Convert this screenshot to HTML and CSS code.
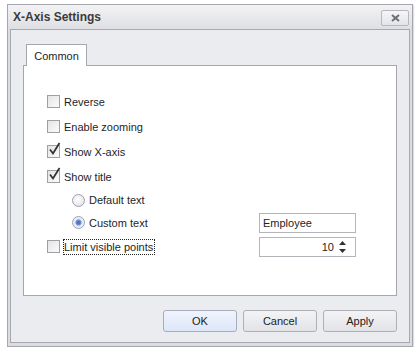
FILE: index.html
```html
<!DOCTYPE html>
<html>
<head>
<meta charset="utf-8">
<link rel="stylesheet" href="styles.css">
</head>
<body>
<div class="window">
  <div class="titlebar">
    <span class="title">X-Axis Settings</span>
    <button class="close" aria-label="Close">
      <svg width="9" height="8" viewBox="0 0 9 8"><path d="M1 1 L8 7 M8 1 L1 7" stroke="#6b6e76" stroke-width="2" fill="none"/></svg>
    </button>
  </div>
  <div class="client">
    <div class="tabs">
      <div class="tab">Common</div>
    </div>
    <div class="panel">
      <div class="row"><span class="cb"></span><span>Reverse</span></div>
      <div class="row"><span class="cb"></span><span>Enable zooming</span></div>
      <div class="row"><span class="cb checked"><svg width="13" height="14" viewBox="0 0 13 14"><path d="M2 7.5 L5 11.5 L11.5 1" stroke="#333" stroke-width="1.8" fill="none"/></svg></span><span>Show X-axis</span></div>
      <div class="row"><span class="cb checked"><svg width="13" height="14" viewBox="0 0 13 14"><path d="M2 7.5 L5 11.5 L11.5 1" stroke="#333" stroke-width="1.8" fill="none"/></svg></span><span>Show title</span></div>
      <div class="row sub"><span class="rb"></span><span>Default text</span></div>
      <div class="row sub split mid"><span class="rb on"></span><span>Custom text</span><span class="field text">Employee</span></div>
      <div class="row split"><span class="cb"></span><span class="focus">Limit visible points</span>
        <span class="field spin"><span class="val">10</span><span class="arrows"><svg width="7" height="14" viewBox="0 0 7 14"><path d="M3.5 1 L7 5 L0 5 Z M0 9 L7 9 L3.5 13 Z" fill="#333"/></svg></span></span>
      </div>
    </div>
    <div class="buttons">
      <button class="btn default">OK</button>
      <button class="btn">Cancel</button>
      <button class="btn">Apply</button>
    </div>
  </div>
</div>
</body>
</html>
```

FILE: styles.css
```css
html, body { margin: 0; padding: 0; background: #ffffff; }
body { font-family: "Liberation Sans", Arial, sans-serif; font-size: 11px; color: #1e1e1e; }
* { box-sizing: border-box; }

.window {
  margin: 4px 0 0 7px;
  width: 406px;
  border: 1px solid #a6a7ae;
  background: linear-gradient(#f3f3f5, #dcdde2 26px, #dcdde2);
  padding: 0 2px 3px 2px;
  box-shadow: 1px 1px 1px rgba(0,0,0,0.12);
}
.titlebar {
  height: 24px;
  display: flex;
  align-items: center;
  justify-content: space-between;
  padding: 0 1px 0 3px;
}
.title { font-weight: bold; font-size: 12px; color: #3b3b3b; }
.close {
  width: 28px; height: 16px;
  border: 1px solid #b7b8be; border-radius: 2px;
  background: linear-gradient(#f6f6f7, #e3e4e8);
  display: flex; align-items: center; justify-content: center;
  padding: 0; margin-top: 2px;
}
.client {
  border: 1px solid #a8a9b0;
  background: #ebecf0;
  padding: 13px 12px 10px 12px;
}
.tabs { display: flex; padding-left: 3px; height: 22px; }
.tab {
  width: 61px;
  border: 1px solid #a6a7ad; border-bottom: none;
  background: #fff;
  display: flex; align-items: center; justify-content: center;
  position: relative; top: 1px; z-index: 1;
}
.panel {
  background: #fff;
  border: 1px solid #a6a7ad;
  height: 231px;
  padding: 23px 0 0 23px;
}
.row { display: flex; align-items: center; height: 25px; }
.row.sub { padding-left: 25px; height: 22px; }
.row.mid { height: 23px; }
.row.split { position: relative; }
.cb {
  width: 13px; height: 13px;
  border: 1px solid #9fa0a6;
  background: linear-gradient(135deg, #e4e4e6, #fbfbfb);
  margin-right: 4px;
  position: relative;
  flex: none;
}
.cb.checked svg { position: absolute; left: 0; top: -4px; }
.rb {
  width: 13px; height: 13px; border-radius: 50%;
  border: 1px solid #a0a1a8;
  background: radial-gradient(circle at 40% 40%, #ffffff, #dcdde2);
  margin-right: 4px;
  flex: none;
}
.rb.on { background: radial-gradient(circle, #3b63b5 0, #6d8fd5 2.5px, #dfe5f3 3.5px, #f4f5f8 6px); }
.focus { outline: 1px dotted #222; outline-offset: 0; padding-right: 1px; line-height: 14px; }
.field {
  position: absolute;
  left: 212px;
  width: 97px; height: 20px;
  border: 1px solid #b4b5bb;
  background: #fff;
  display: flex; align-items: center;
}
.field.text { padding-left: 3px; }
.field.spin { justify-content: flex-end; }
.val { margin-right: 5px; }
.arrows { width: 14px; display: flex; align-items: center; margin-right: 2px; }
.buttons {
  display: flex; justify-content: flex-end; gap: 6px;
  margin-top: 14px;
}
.btn {
  width: 74px; height: 22px;
  border: 1px solid #aeafb5; border-radius: 3px;
  background: linear-gradient(#f4f4f6, #e2e3e7);
  font-family: inherit; font-size: 11px; color: #222;
  padding: 0;
}
.btn.default {
  border-color: #a8acbd;
  background: linear-gradient(#f0f4fd, #dde6f8);
}
```
